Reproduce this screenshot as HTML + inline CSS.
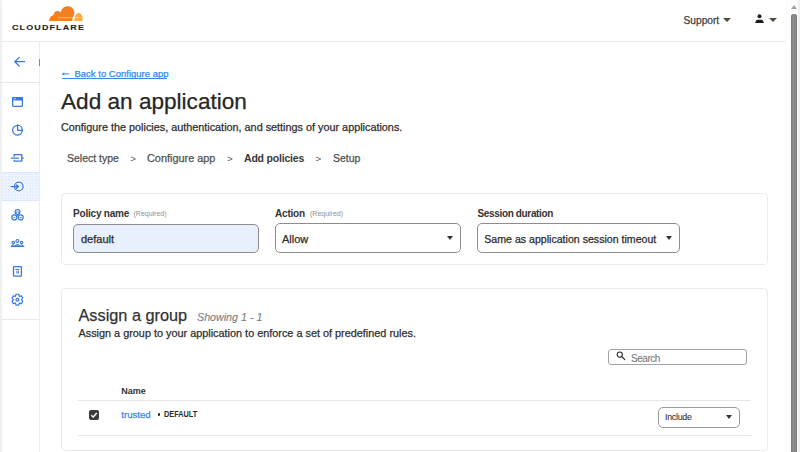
<!DOCTYPE html>
<html><head><meta charset="utf-8">
<style>
*{margin:0;padding:0;box-sizing:border-box}
html,body{width:800px;height:452px;overflow:hidden;background:#fff;font-family:"Liberation Sans",sans-serif;color:#313131}
.a{position:absolute;white-space:nowrap;line-height:1;-webkit-text-stroke:0.25px currentColor}
#hdr{position:absolute;left:0;top:0;width:787px;height:42px;border-bottom:1px solid #ebebeb}
#side{position:absolute;left:0;top:42px;width:40px;height:410px;border-right:1px solid #ececec;border-left:2px solid #f0f0f0}
.box{position:absolute;border:1px solid #ebebeb;border-radius:4px;background:#fff}
.inp{position:absolute;border:1px solid #8d8d8d;border-radius:5px;background:#fff}
.caret{position:absolute;width:0;height:0;border-left:4px solid transparent;border-right:4px solid transparent;border-top:4px solid #333}
.lbl{font-weight:700;color:#333;-webkit-text-stroke:0}
.req{color:#909090;-webkit-text-stroke:0}
</style></head><body>
<!-- header -->
<div id="hdr"></div>
<div class="a" style="left:0;top:0;width:2px;height:42px;background:#f0f0f0;border-top-left-radius:2px"></div>
<svg class="a" style="left:45px;top:2px" width="42" height="22" viewBox="45 2 42 22">
  <path d="M49.2 21 C49.2 17.6 51 15.6 53.4 15.3 C53.9 12.3 55.6 10.9 57.4 10.9 C58.8 10.9 59.9 11.5 60.6 12.4 C61.6 8.3 64.2 6.2 67.6 6.2 C71.5 6.2 74.4 9.1 74.4 12.6 C74.4 14.6 73.8 16.3 72.8 17.6 L72.2 21 Z" fill="#f38020"/>
  <path d="M74.1 21 L74.9 17.6 C75.3 14.6 76.8 13 78.6 13 C81.1 13 82.6 15.5 82.6 18.6 L82.6 21 Z" fill="#faad3f"/>
  <path d="M58 17.7 L78.6 17.7" stroke="#fff" stroke-width="0.6" opacity="0.75"/>
  <path d="M72.2 17.7 L73.6 16.9 L74.9 17.7 L73.6 18.6 Z" fill="#fff"/>
</svg>
<div class="a" style="left:12px;top:23.6px;font-size:7.8px;font-weight:700;letter-spacing:0.98px;color:#1e1e1e;-webkit-text-stroke:0.1px #1e1e1e;transform:scaleX(1.15);transform-origin:0 0">CLOUDFLARE</div>
<div class="a" style="left:683.5px;top:16.2px;font-size:10.2px;color:#404040">Support</div>
<div class="caret" style="left:722.8px;top:18.2px;border-left-width:4.4px;border-right-width:4.4px;border-top-width:4.6px;border-top-color:#54493f"></div>
<svg class="a" style="left:754px;top:13px" width="11" height="11" viewBox="754 13 11 11">
  <circle cx="759.5" cy="16.3" r="2" fill="#1f1f1f"/>
  <path d="M755 23.1 L756.2 20.6 Q756.6 19.8 757.6 19.8 H761.4 Q762.4 19.8 762.8 20.6 L764 23.1 Z" fill="#1f1f1f"/>
</svg>
<div class="caret" style="left:768.8px;top:17.9px;border-left-width:4.4px;border-right-width:4.4px;border-top-width:4.7px;border-top-color:#54493f"></div>
<!-- scrollbar -->
<div class="a" style="left:786px;top:0;width:14px;height:452px;background:#fdfdfe;border-left:1px solid #fafbfc"></div>
<div class="a" style="left:798px;top:0;width:2px;height:452px;background:#efefef"></div>
<div class="caret" style="left:790.5px;top:5px;border-top:none;border-bottom:4px solid #a3a3a3;border-left-width:3.5px;border-right-width:3.5px"></div>
<div class="a" style="left:790.8px;top:14px;width:6.5px;height:450px;background:#8a8a8a;border-radius:3.2px;box-shadow:inset 1px 0 0 #7c7c7c, inset -1px 0 0 #7c7c7c"></div>

<!-- sidebar -->
<div id="side"></div>
<div class="a" style="left:1px;top:82px;width:38px;height:1px;background:#e8e8e8"></div>
<div class="a" style="left:38.5px;top:58.5px;width:1.5px;height:7.5px;background:#888"></div>
<div class="a" style="left:2px;top:172px;width:37px;height:29px;background-color:#e8f0fd;background-image:radial-gradient(circle,rgba(255,255,255,0.9) 0.45px,rgba(255,255,255,0) 0.9px);background-size:3px 3px;background-position:1px 1px;border-top:1px solid #d9e6fb;border-bottom:1px solid #d9e6fb"></div>
<div class="a" style="left:1px;top:319px;width:38px;height:1px;background:#e8e8e8"></div>


<svg class="a" style="left:0;top:42px" width="40" height="290" viewBox="0 42 40 290" fill="none" stroke="#3b78dc" stroke-width="1.3" stroke-linecap="round" stroke-linejoin="round">
  <path d="M14.8 61.7 H24.6 M19.3 57.4 L14.8 61.7 L19.3 66.1"/>
  <rect x="12.6" y="97.6" width="9.8" height="8.7" rx="0.8"/>
  <path d="M12 100.4 V98.1 Q12 97 13.1 97 H21.9 Q23 97 23 98.1 V100.4 Z" fill="#3b78dc" stroke="none"/><rect x="13.6" y="98.3" width="2.2" height="1" fill="#c9d9f6" stroke="none"/>
  <path d="M16.6 125.6 A4.8 4.8 0 1 0 22.3 130.3 H17.6 V125.2"/>
  <path d="M17.6 125.2 A4.9 4.9 0 0 1 22.3 130.0"/>
  <path d="M14.2 156.2 V154.6 H21.8 V161.2 H14.2 V160.4 M11.3 158.2 H18.3 M22 158.2 H23.3"/>
  <circle cx="18.8" cy="186.5" r="4.3" stroke="#fff" stroke-width="3.2"/><circle cx="18.8" cy="186.5" r="4.3"/>
  <path d="M11.3 186.6 H18.3 M16.5 184.9 L18.4 186.6 L16.5 188.3"/>
  <circle cx="17.5" cy="211.9" r="2.4" stroke-width="1.2"/>
  <circle cx="14.3" cy="217.4" r="2.5" stroke-width="1.2"/>
  <circle cx="20.7" cy="217.4" r="2.5" stroke-width="1.2"/>
  <path d="M16.6 212.6 V211.6 Q17.5 210.6 18.4 211.6 V212.6 M13.5 217.6 H15.1 M19.9 217.6 H21.5 M17.5 214.8 V216" stroke-width="0.8"/>
  <path d="M11.4 246.3 H23.6" stroke-width="1.5"/>
  <circle cx="17.4" cy="240.9" r="1.45" stroke-width="1.15"/>
  <circle cx="13.3" cy="242.6" r="1.25" stroke-width="1.1"/>
  <circle cx="21.6" cy="242.6" r="1.25" stroke-width="1.1"/>
  <path d="M14.9 246 Q17.4 243.2 19.9 246" stroke-width="1.1"/>
  <path d="M11.8 246 Q12.2 244.6 13.3 244.5 M23 246 Q22.6 244.6 21.6 244.5" stroke-width="1"/>
  <rect x="13.5" y="266.7" width="7.9" height="9.4" rx="0.6"/>
  <path d="M15.7 269.4 H19.2 M16.9 271 V273.2 M18.4 271 V273.2" stroke-width="1"/>
  <path d="M15.45 296.32 L16.05 294.27 L18.75 294.27 L19.35 296.32 L21.43 295.81 L22.78 298.16 L21.30 299.70 L22.78 301.24 L21.43 303.59 L19.35 303.08 L18.75 305.13 L16.05 305.13 L15.45 303.08 L13.37 303.59 L12.02 301.24 L13.50 299.70 L12.02 298.16 L13.37 295.81 Z" stroke-width="1.2"/>
  <circle cx="17.4" cy="299.7" r="1.4"/>
</svg>

<!-- main -->
<div class="a" style="left:74.5px;top:69.3px;font-size:9.5px;color:#3a86f0">Back to Configure app</div>
<div class="a" style="left:61.5px;top:78px;width:105.5px;height:1px;background:#3a86f0"></div>
<svg class="a" style="left:61px;top:70px" width="10" height="8" viewBox="0 0 10 8"><path d="M1.5 3.9 H8.3" stroke="#3a86f0" stroke-width="1"/><path d="M0.8 3.9 L3.3 2.2 V5.6 Z" fill="#3a86f0"/></svg>
<div class="a" style="left:61px;top:91px;font-size:22.6px;color:#262626">Add an application</div>
<div class="a" style="left:61px;top:122.3px;font-size:10.83px;color:#2e2e2e">Configure the policies, authentication, and settings of your applications.</div>
<div class="a" style="left:67px;top:152.5px;font-size:10.5px;color:#505050">Select type</div>
<div class="a" style="left:130.2px;top:153.6px;font-size:9.8px;color:#5a5a5a;-webkit-text-stroke:0">&gt;</div>
<div class="a" style="left:147px;top:152.5px;font-size:10.9px;color:#505050">Configure app</div>
<div class="a" style="left:227px;top:153.6px;font-size:9.8px;color:#5a5a5a;-webkit-text-stroke:0">&gt;</div>
<div class="a" style="left:244px;top:152.5px;font-size:10.5px;font-weight:700;color:#383838;letter-spacing:-0.2px;-webkit-text-stroke:0">Add policies</div>
<div class="a" style="left:315.5px;top:153.6px;font-size:9.8px;color:#5a5a5a;-webkit-text-stroke:0">&gt;</div>
<div class="a" style="left:333px;top:152.5px;font-size:10.5px;color:#505050">Setup</div>

<!-- card 1 -->
<div class="box" style="left:61px;top:193px;width:707px;height:72px"></div>
<div class="a lbl" style="left:73px;top:209px;font-size:10px;letter-spacing:-0.2px">Policy name</div>
<div class="a req" style="left:133.5px;top:210.3px;font-size:7px">(Required)</div>
<div class="inp" style="left:72.5px;top:223.5px;width:186px;height:29.5px;background:#e8f0fe;border-color:#8d8d8d"></div>
<div class="a" style="left:81px;top:233.5px;font-size:11px;color:#2b2b2b">default</div>

<div class="a lbl" style="left:275px;top:209px;font-size:10px;letter-spacing:-0.2px">Action</div>
<div class="a req" style="left:310px;top:210.3px;font-size:7px">(Required)</div>
<div class="inp" style="left:275px;top:223.3px;width:186px;height:29.8px"></div>
<div class="a" style="left:282px;top:233.5px;font-size:11px;color:#2b2b2b">Allow</div>
<div class="caret" style="left:447px;top:236px;border-left-width:3.5px;border-right-width:3.5px;border-top-width:4px"></div>

<div class="a lbl" style="left:477.5px;top:209px;font-size:10px;letter-spacing:-0.35px">Session duration</div>
<div class="inp" style="left:477px;top:223.3px;width:202.5px;height:29.8px"></div>
<div class="a" style="left:484.3px;top:233.5px;font-size:10.6px;color:#2b2b2b">Same as application session timeout</div>
<div class="caret" style="left:666px;top:236px;border-left-width:3.5px;border-right-width:3.5px;border-top-width:4px"></div>

<!-- card 2 -->
<div class="box" style="left:61px;top:288px;width:707px;height:163px"></div>
<div class="a" style="left:78.5px;top:306.9px;font-size:16.3px;color:#333">Assign a group</div>
<div class="a" style="left:197px;top:312px;font-size:10.7px;font-style:italic;color:#7c7c7c;-webkit-text-stroke:0.1px #7c7c7c">Showing 1 - 1</div>
<div class="a" style="left:78.5px;top:328px;font-size:10.86px;color:#2e2e2e">Assign a group to your application to enforce a set of predefined rules.</div>

<div class="inp" style="left:607.5px;top:349px;width:139.5px;height:15.8px;border-color:#a3a3a3;border-radius:3px"></div>
<svg class="a" style="left:614px;top:349px" width="14" height="14" viewBox="614 349 14 14">
  <circle cx="619.8" cy="354.6" r="2.6" stroke="#2a2a2a" stroke-width="1.05" fill="none"/>
  <path d="M621.7 356.5 L624.8 359.6" stroke="#2a2a2a" stroke-width="1.15" stroke-linecap="round"/>
</svg>
<div class="a" style="left:631px;top:353.9px;font-size:10px;letter-spacing:-0.45px;color:#7a7a7a;-webkit-text-stroke:0.1px #7a7a7a">Search</div>

<div class="a lbl" style="left:121.3px;top:387px;font-size:9px">Name</div>
<div class="a" style="left:78px;top:400px;width:673px;height:1px;background:#e6e6e6"></div>
<div class="a" style="left:89.3px;top:410px;width:10.2px;height:10px;background:#3b3b3b;border-radius:2px"></div>
<svg class="a" style="left:89.3px;top:410px" width="10" height="10" viewBox="0 0 10 10"><path d="M2.3 5.2 L4.2 7 L7.8 3" stroke="#fff" stroke-width="1.4" fill="none"/></svg>
<div class="a" style="left:121.3px;top:409.7px;font-size:9.6px;color:#3a86f0">trusted</div>
<div class="a" style="left:158px;top:413.3px;width:2.4px;height:2.4px;border-radius:50%;background:#222"></div>
<div class="a" style="left:164.3px;top:410.3px;font-size:8.3px;font-weight:700;color:#2a2a2a;-webkit-text-stroke:0;transform:scaleX(0.88);transform-origin:0 0">DEFAULT</div>
<div class="inp" style="left:658px;top:407px;width:82px;height:20.5px;border-color:#999;border-radius:5px"></div>
<div class="a" style="left:665px;top:413.3px;font-size:8.8px;letter-spacing:-0.25px;color:#333;-webkit-text-stroke:0.1px #333">Include</div>
<div class="caret" style="left:725.5px;top:415px;border-left-width:3.5px;border-right-width:3.5px;border-top-width:4px"></div>
<div class="a" style="left:78px;top:434.5px;width:673px;height:1px;background:#e6e6e6"></div>
</body></html>
